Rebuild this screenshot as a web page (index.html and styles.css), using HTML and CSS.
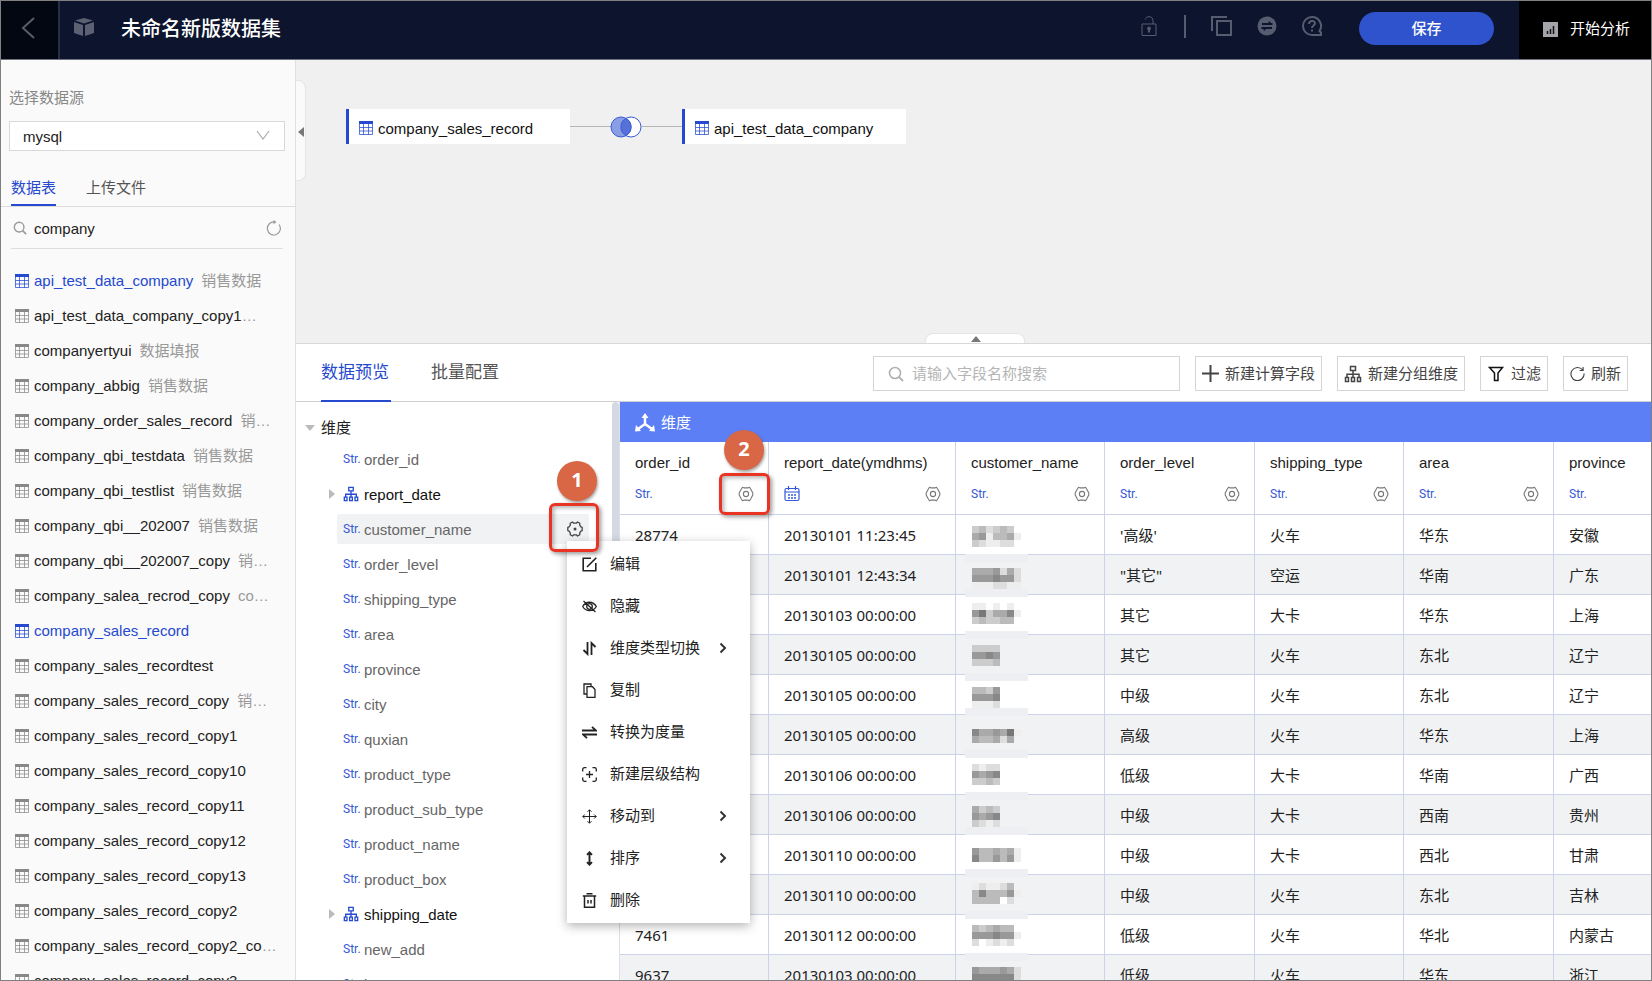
FILE: index.html
```html
<!DOCTYPE html>
<html lang="zh-CN">
<head>
    <meta charset="UTF-8">
    <meta name="viewport" content="width=device-width, initial-scale=1.0">
    <title>未命名新版数据集</title>
    <link rel="stylesheet" href="styles.css">
</head>
<body>
    <svg class="sprite" aria-hidden="true">
        <symbol id="i-table" viewBox="0 0 14 14">
            <path d="M0 0h14v3H0z" fill="currentColor"/>
            <path d="M.5 3v10.500h13V3M.5 6.500h13M.5 10h13M4.500 3v10.500M9.500 3v10.500" fill="none" stroke="currentColor" opacity=".75"/>
        </symbol>
        <symbol id="i-search" viewBox="0 0 16 16">
            <circle cx="7" cy="7" r="5.500" fill="none" stroke="currentColor" stroke-width="1.600"/>
            <path d="M11 11l4 4" stroke="currentColor" stroke-width="1.800"/>
        </symbol>
        <symbol id="i-refresh" viewBox="0 0 16 16">
            <path d="M13.500 4.200A7 7 0 1 0 15 8M14 1v3.800h-3.800" fill="none" stroke="currentColor" stroke-width="1.200"/>
        </symbol>
        <symbol id="i-reload" viewBox="0 0 16 16">
            <path d="M8.500 2A6.500 6.500 0 1 0 13 4.500" fill="none" stroke="currentColor" stroke-width="1.200"/>
            <path d="M7.500 0l3 2-3 2.200z" fill="currentColor"/>
        </symbol>
        <symbol id="i-tree" viewBox="0 0 18 18">
            <path d="M6.500 1.500h5v4h-5zM1.500 12.500h3v4h-3zM7.500 12.500h3v4h-3zM13.500 12.500h3v4h-3zM9 5.500v7M3 12.500V9.300h12v3.200" fill="none" stroke="currentColor" stroke-width="1.500"/>
        </symbol>
        <symbol id="i-hex" viewBox="0 0 16 16">
            <path d="M4.500 1.200L6.200 1.900h3.600l1.700-.7 1.300 2L14.800 7v2l-2 3.800-1.300 2-1.700-.7H6.200l-1.700.7-1.300-2L1.200 9V7l2-3.800z" fill="none" stroke="currentColor" stroke-width="1.100" stroke-linejoin="round"/>
            <circle cx="8" cy="8" r="2.600" fill="none" stroke="currentColor" stroke-width="1.100"/>
        </symbol>
        <symbol id="i-gear" viewBox="0 0 16 16">
            <path d="M5.500 1l1.200 1.200h2.600L10.500 1l2.300 1.300-.1 1.900 1.200 1.600 1.300.6v3.200l-1.300.6-1.200 1.600.1 1.900-2.300 1.300-1.200-1.200H6.700L5.500 15l-2.300-1.300.1-1.900-1.200-1.600L.8 9.600V6.400l1.300-.6 1.200-1.600-.1-1.900z" fill="none" stroke="currentColor" stroke-width="1.300" stroke-linejoin="round"/>
            <circle cx="8" cy="8" r="1.500" fill="currentColor"/>
        </symbol>
        <symbol id="i-calendar" viewBox="0 0 16 16">
            <rect x="1" y="2.500" width="14" height="12" rx="1.500" fill="none" stroke="currentColor" stroke-width="1.200"/>
            <path d="M1 6h14M4.500 0v4M11.500 0v4" stroke="currentColor" stroke-width="1.200"/>
            <path d="M4 9h8M4 12h8" stroke="currentColor" stroke-width="1.500" stroke-dasharray="2 1"/>
        </symbol>
        <symbol id="i-chevron" viewBox="0 0 8 12">
            <path d="M1.500 1.500L6 6l-4.500 4.500" fill="none" stroke="currentColor" stroke-width="2"/>
        </symbol>
    </svg>

    <div class="app">
        <header class="header">
            <button class="back" aria-label="返回">
                <svg width="14" height="22" viewBox="0 0 14 22"><path d="M13 1L2 11l11 10" fill="none" stroke="currentColor" stroke-width="2"/></svg>
            </button>
            <svg class="cube" width="20" height="18" viewBox="0 0 20 18" fill="currentColor"><path d="M10 0l9 2.600-9 2.900-9-2.900zM0 4l9 3v11l-9-3zM20 4l-9 3v11l9-3z"/></svg>
            <h1 class="title">未命名新版数据集</h1>
            <div class="header-tools">
                <button class="tool" aria-label="锁定">
                    <svg width="20" height="20" viewBox="0 0 20 20" fill="none" stroke="currentColor"><path d="M3 8h14v11.500H3zM6 3.500C7 1.500 8 .7 10 .7c2.500 0 4 1.500 4 4V8"/><circle cx="10" cy="12.500" r="1.500" fill="currentColor"/><path d="M10 13v3.500" stroke-width="2"/></svg>
                </button>
                <span class="tool-divider"></span>
                <button class="tool" aria-label="复制">
                    <svg width="21" height="20" viewBox="0 0 21 20" fill="none" stroke="currentColor" stroke-width="2"><path d="M1 15V1h15M6 5h14v14H6z"/></svg>
                </button>
                <button class="tool" aria-label="切换">
                    <svg width="20" height="20" viewBox="0 0 20 20"><circle cx="10" cy="10" r="9.500" fill="currentColor"/><path d="M5 8h10.500M12.500 5.500V8M15 12H4.500M7.500 12v2.500" fill="none" stroke="#0c142e" stroke-width="1.800"/></svg>
                </button>
                <button class="tool tool-help" aria-label="帮助">
                    <svg width="20" height="20" viewBox="0 0 20 20" fill="none" stroke="currentColor" stroke-width="2"><path d="M10 1a9 9 0 1 0 0 18h9v-2.500l-1.500-1.500A9 9 0 0 0 10 1zM7 8c0-4 6-4 6-.7C13 9.500 10 9.500 10 12M10 13.500v2"/></svg>
                </button>
                <button class="save">保存</button>
            </div>
            <button class="analyze">
                <svg width="15" height="15" viewBox="0 0 15 15"><path d="M0 0h15v15H0z" fill="#a3a5ab"/><path d="M4.500 12V9M7.500 12V7M10.500 12V4" stroke="#111" stroke-width="1.500"/></svg>
                开始分析
            </button>
        </header>

        <div class="body">
            <aside class="sidebar">
                <label class="source-label" for="source">选择数据源</label>
                <div class="source">
                    <select id="source"><option>mysql</option></select>
                    <svg width="14" height="10" viewBox="0 0 14 10"><path d="M1 1l6 8 6-8" fill="none" stroke="currentColor" stroke-width="1.200"/></svg>
                </div>
                <nav class="side-tabs">
                    <button class="side-tab active">数据表</button>
                    <button class="side-tab">上传文件</button>
                </nav>
                <div class="side-search">
                    <svg width="14" height="14"><use href="#i-search"/></svg>
                    <input type="text" value="company" aria-label="搜索数据表">
                    <button aria-label="刷新"><svg width="16" height="16"><use href="#i-reload"/></svg></button>
                </div>
                <ul class="tables">
                    <li class="used"><svg><use href="#i-table"/></svg><p><span>api_test_data_company</span>销售数据</p></li>
                    <li><svg><use href="#i-table"/></svg><p><span>api_test_data_company_copy1</span>销售数据</p></li>
                    <li><svg><use href="#i-table"/></svg><p><span>companyertyui</span>数据填报</p></li>
                    <li><svg><use href="#i-table"/></svg><p><span>company_abbig</span>销售数据</p></li>
                    <li><svg><use href="#i-table"/></svg><p><span>company_order_sales_record</span>销售数据</p></li>
                    <li><svg><use href="#i-table"/></svg><p><span>company_qbi_testdata</span>销售数据</p></li>
                    <li><svg><use href="#i-table"/></svg><p><span>company_qbi_testlist</span>销售数据</p></li>
                    <li><svg><use href="#i-table"/></svg><p><span>company_qbi__202007</span>销售数据</p></li>
                    <li><svg><use href="#i-table"/></svg><p><span>company_qbi__202007_copy</span>销售数据</p></li>
                    <li><svg><use href="#i-table"/></svg><p><span>company_salea_recrod_copy</span>company</p></li>
                    <li class="used"><svg><use href="#i-table"/></svg><p><span>company_sales_record</span></p></li>
                    <li><svg><use href="#i-table"/></svg><p><span>company_sales_recordtest</span></p></li>
                    <li><svg><use href="#i-table"/></svg><p><span>company_sales_record_copy</span>销售数据</p></li>
                    <li><svg><use href="#i-table"/></svg><p><span>company_sales_record_copy1</span></p></li>
                    <li><svg><use href="#i-table"/></svg><p><span>company_sales_record_copy10</span></p></li>
                    <li><svg><use href="#i-table"/></svg><p><span>company_sales_record_copy11</span></p></li>
                    <li><svg><use href="#i-table"/></svg><p><span>company_sales_record_copy12</span></p></li>
                    <li><svg><use href="#i-table"/></svg><p><span>company_sales_record_copy13</span></p></li>
                    <li><svg><use href="#i-table"/></svg><p><span>company_sales_record_copy2</span></p></li>
                    <li><svg><use href="#i-table"/></svg><p><span>company_sales_record_copy2_copy</span></p></li>
                    <li><svg><use href="#i-table"/></svg><p><span>company_sales_record_copy3</span></p></li>
                </ul>
            </aside>

            <main class="main">
                <section class="canvas">
                    <div class="join">
                        <div class="node"><svg><use href="#i-table"/></svg>company_sales_record</div>
                        <span class="link"></span>
                        <svg class="venn" width="32" height="22" viewBox="0 0 32 22" stroke="#3a5bd6">
                            <circle cx="21" cy="11" r="10" fill="#fff"/>
                            <circle cx="11" cy="11" r="10" fill="#8a9fe3"/>
                            <path d="M16 2.300a10 10 0 0 1 0 17.400a10 10 0 0 1 0-17.400z" fill="#5672d8"/>
                        </svg>
                        <span class="link"></span>
                        <div class="node"><svg><use href="#i-table"/></svg>api_test_data_company</div>
                    </div>
                    <button class="fold-left" aria-label="收起侧栏"></button>
                    <button class="fold-up" aria-label="展开预览"></button>
                </section>

                <section class="preview">
                    <div class="bar">
                        <button class="tab active">数据预览</button>
                        <button class="tab">批量配置</button>
                        <div class="bar-tools">
                            <div class="field-search">
                                <svg width="16" height="16"><use href="#i-search"/></svg>
                                <input type="text" placeholder="请输入字段名称搜索" aria-label="请输入字段名称搜索">
                            </div>
                            <button class="btn"><svg width="17" height="17" viewBox="0 0 17 17"><path d="M8.500 0v17M0 8.500h17" stroke="currentColor" stroke-width="2"/></svg>新建计算字段</button>
                            <button class="btn"><svg width="18" height="18"><use href="#i-tree"/></svg>新建分组维度</button>
                            <button class="btn"><svg width="18" height="18" viewBox="0 0 18 18"><path d="M2.500 2.500h13L11 8v7.500H7.500V8z" fill="none" stroke="#111" stroke-width="1.500"/></svg>过滤</button>
                            <button class="btn"><svg width="15" height="15"><use href="#i-refresh"/></svg>刷新</button>
                        </div>
                    </div>

                    <div class="content">
                        <div class="tree">
                            <h2 class="tree-head"><i class="caret-down"></i>维度</h2>
                            <ul>
                                <li><div class="field"><b>Str.</b>order_id</div></li>
                                <li class="group"><div class="field"><svg width="16" height="16"><use href="#i-tree"/></svg>report_date</div></li>
                                <li class="current"><div class="field"><b>Str.</b>customer_name<button class="gear" aria-label="字段设置"><svg width="16" height="16"><use href="#i-gear"/></svg></button></div></li>
                                <li><div class="field"><b>Str.</b>order_level</div></li>
                                <li><div class="field"><b>Str.</b>shipping_type</div></li>
                                <li><div class="field"><b>Str.</b>area</div></li>
                                <li><div class="field"><b>Str.</b>province</div></li>
                                <li><div class="field"><b>Str.</b>city</div></li>
                                <li><div class="field"><b>Str.</b>quxian</div></li>
                                <li><div class="field"><b>Str.</b>product_type</div></li>
                                <li><div class="field"><b>Str.</b>product_sub_type</div></li>
                                <li><div class="field"><b>Str.</b>product_name</div></li>
                                <li><div class="field"><b>Str.</b>product_box</div></li>
                                <li class="group"><div class="field"><svg width="16" height="16"><use href="#i-tree"/></svg>shipping_date</div></li>
                                <li><div class="field"><b>Str.</b>new_add</div></li>
                                <li><div class="field"><b>Str.</b>is_new</div></li>
                            </ul>
                        </div>
                        <div class="scroll"><span></span></div>

                        <div class="grid">
                            <div class="grid-band">
                                <svg width="20" height="20" viewBox="0 0 20 20"><path d="M10 3v9M10 11l-7 5M10 11l7 5" stroke="#fff" stroke-width="2.500"/><path d="M10 0l3.500 5h-7zM0 18.500l1-6.500 5 6zM20 18.500l-1-6.500-5 6z" fill="#fff"/></svg>
                                维度
                            </div>
                            <table>
                                <colgroup>
                                    <col class="c149"><col class="c187"><col class="c149"><col class="c150"><col class="c149"><col class="c150"><col>
                                </colgroup>
                                <thead>
                                    <tr>
                                        <th>order_id<div><b>Str.</b><button class="gear" aria-label="设置"><svg width="16" height="16"><use href="#i-hex"/></svg></button></div></th>
                                        <th>report_date(ymdhms)<div><svg class="date" width="16" height="16"><use href="#i-calendar"/></svg><button class="gear" aria-label="设置"><svg width="16" height="16"><use href="#i-hex"/></svg></button></div></th>
                                        <th>customer_name<div><b>Str.</b><button class="gear" aria-label="设置"><svg width="16" height="16"><use href="#i-hex"/></svg></button></div></th>
                                        <th>order_level<div><b>Str.</b><button class="gear" aria-label="设置"><svg width="16" height="16"><use href="#i-hex"/></svg></button></div></th>
                                        <th>shipping_type<div><b>Str.</b><button class="gear" aria-label="设置"><svg width="16" height="16"><use href="#i-hex"/></svg></button></div></th>
                                        <th>area<div><b>Str.</b><button class="gear" aria-label="设置"><svg width="16" height="16"><use href="#i-hex"/></svg></button></div></th>
                                        <th>province<div><b>Str.</b></div></th>
                                    </tr>
                                </thead>
                                <tbody>
                                    <tr><td>28774</td><td>20130101 11:23:45</td><td></td><td>'高级'</td><td>火车</td><td>华东</td><td>安徽</td></tr>
                                    <tr><td></td><td>20130101 12:43:34</td><td></td><td>"其它"</td><td>空运</td><td>华南</td><td>广东</td></tr>
                                    <tr><td></td><td>20130103 00:00:00</td><td></td><td>其它</td><td>大卡</td><td>华东</td><td>上海</td></tr>
                                    <tr><td></td><td>20130105 00:00:00</td><td></td><td>其它</td><td>火车</td><td>东北</td><td>辽宁</td></tr>
                                    <tr><td></td><td>20130105 00:00:00</td><td></td><td>中级</td><td>火车</td><td>东北</td><td>辽宁</td></tr>
                                    <tr><td></td><td>20130105 00:00:00</td><td></td><td>高级</td><td>火车</td><td>华东</td><td>上海</td></tr>
                                    <tr><td></td><td>20130106 00:00:00</td><td></td><td>低级</td><td>大卡</td><td>华南</td><td>广西</td></tr>
                                    <tr><td></td><td>20130106 00:00:00</td><td></td><td>中级</td><td>大卡</td><td>西南</td><td>贵州</td></tr>
                                    <tr><td></td><td>20130110 00:00:00</td><td></td><td>中级</td><td>大卡</td><td>西北</td><td>甘肃</td></tr>
                                    <tr><td></td><td>20130110 00:00:00</td><td></td><td>中级</td><td>火车</td><td>东北</td><td>吉林</td></tr>
                                    <tr><td>7461</td><td>20130112 00:00:00</td><td></td><td>低级</td><td>火车</td><td>华北</td><td>内蒙古</td></tr>
                                    <tr><td>9637</td><td>20130103 00:00:00</td><td></td><td>低级</td><td>火车</td><td>华东</td><td>浙江</td></tr>
                                </tbody>
                            </table>
                            <svg class="mask" id="mask" width="63" height="455"></svg>
                        </div>
                    </div>
                </section>

                <div class="menu" role="menu">
                    <button role="menuitem"><svg viewBox="0 0 15 15"><path d="M9 1.200H1.200v12.600h12.600V6M5 10l9.300-9.300" stroke-width="1.600"/></svg>编辑</button>
                    <button role="menuitem"><svg viewBox="0 0 15 15"><path d="M.7 7.500C4 1.800 11 1.800 14.300 7.500 11 13 4 13 .7 7.500zM1.500 2l12 11" stroke-width="1.300"/><circle cx="7.500" cy="7.500" r="2.800" stroke-width="1.300"/></svg>隐藏</button>
                    <button role="menuitem"><svg viewBox="0 0 15 15"><path d="M5.500 1v12L1.500 9M9.500 14V2l4 4" stroke-width="1.800"/></svg>维度类型切换<svg class="more"><use href="#i-chevron"/></svg></button>
                    <button role="menuitem"><svg viewBox="0 0 15 15"><path d="M5 3.700h5.500L13 6.500v7.800H5zM4.500 11H2V1h7v2.500" stroke-width="1.300"/></svg>复制</button>
                    <button role="menuitem"><svg viewBox="0 0 15 15"><path d="M0 5.500h14L10 1.800M15 9.500H1l4 3.700" stroke-width="1.800"/></svg>转换为度量</button>
                    <button role="menuitem"><svg viewBox="0 0 15 15"><path d="M4.500.7H2.500Q.7.700.7 2.500V4.500M10.500.7h2q1.800 0 1.800 1.800v2M.7 10.500v2q0 1.800 1.800 1.800h2M14.300 10.500v2q0 1.800-1.800 1.800h-2M7.500 4v7M4 7.500h7" stroke-width="1.300"/></svg>新建层级结构</button>
                    <button role="menuitem"><svg viewBox="0 0 15 15"><path d="M7.500.8v13.400M.8 7.500h13.400M5.500 2.800l2-2 2 2M5.500 12.200l2 2 2-2M2.800 5.500l-2 2 2 2M12.200 5.500l2 2-2 2"/></svg>移动到<svg class="more"><use href="#i-chevron"/></svg></button>
                    <button role="menuitem"><svg viewBox="0 0 15 15"><path d="M7.500 1v13M5 3.800l2.500-2.500L10 3.800M5 11.200l2.500 2.500 2.500-2.500" stroke-width="1.900"/></svg>排序<svg class="more"><use href="#i-chevron"/></svg></button>
                    <button role="menuitem"><svg viewBox="0 0 15 15"><path d="M.8 3h13.400M4.500.8h6M2.500 3v11.200h10V3M6 7v3.500M9 7v3.500" stroke-width="1.500"/></svg>删除</button>
                </div>

                <div class="step step-1">1</div>
                <div class="frame frame-1"></div>
                <div class="step step-2">2</div>
                <div class="frame frame-2"></div>
            </main>
        </div>
    </div>
    <script src="script.js"></script>
</body>
</html>
```
FILE: styles.css
```css
* { box-sizing: border-box; }
body {
    margin: 0;
    font-family: "Liberation Sans", "Noto Sans CJK SC", sans-serif;
    font-size: 15px;
    line-height: 20px;
    color: #222;
}
button, input, select {
    font: inherit;
    color: inherit;
    margin: 0;
    padding: 0;
    border: 0;
    background: none;
    outline: none;
}
ul, p, h1, h2 { margin: 0; padding: 0; list-style: none; font-weight: normal; }
svg { display: block; flex: none; }
.sprite { position: absolute; width: 0; height: 0; }

.app {
    display: flex;
    flex-direction: column;
    height: 100vh;
    border: 1px solid #808080;
    overflow: hidden;
}

/* header */
.header {
    display: flex;
    align-items: stretch;
    flex: none;
    height: 59px;
    background: #0c142e;
    border-bottom: 1px solid #6f7280;
    color: #fff;
}
.back {
    display: flex;
    align-items: center;
    width: 59px;
    padding: 0 0 4px 20px;
    background: #030712;
    border-right: 2px solid #282e43;
    color: #5a5d68;
}
.cube { align-self: center; margin: 0 27px 6px 14px; color: #5b6072; }
.title { font-size: 20px; line-height: 56px; font-weight: 500; }
.header-tools {
    display: flex;
    align-items: center;
    gap: 25px;
    margin-left: auto;
    padding: 0 25px 3px 0;
}
.tool { color: #575d70; margin-bottom: 5px; }
.tool-divider { width: 2px; height: 23px; background: #575d70; margin-bottom: 4px; }
.tool-help { margin-right: 12px; }
.save {
    width: 135px;
    height: 33px;
    border-radius: 17px;
    background: #2f53cd;
    font-weight: 500;
}
.analyze {
    display: flex;
    align-items: center;
    justify-content: center;
    gap: 12px;
    width: 132px;
    padding: 0 0 2px 3px;
    background: #000;
}

.body { display: flex; flex: 1; min-height: 0; }

/* sidebar */
.sidebar {
    flex: none;
    display: flex;
    flex-direction: column;
    width: 295px;
    background: #fafafa;
    border-right: 1px solid #e0e0e0;
    overflow: hidden;
}
.source-label { margin: 28px 8px 13px; color: #888; }
.source { position: relative; margin: 0 10px 0 8px; }
.source select {
    display: block;
    width: 100%;
    height: 30px;
    padding: 1px 13px 0;
    border: 1px solid #d9d9d9;
    background: #fff;
    appearance: none;
}
.source svg { position: absolute; right: 15px; top: 9px; color: #aaa; pointer-events: none; }
.side-tabs {
    display: flex;
    gap: 30px;
    margin-top: 16px;
    padding-left: 10px;
    border-bottom: 1px solid #ddd;
}
.side-tab { height: 39px; padding-top: 4px; border-bottom: 2px solid transparent; color: #555; }
.side-tab.active { color: #2549cf; border-color: #2549cf; }
.side-search {
    display: flex;
    align-items: center;
    flex: none;
    gap: 7px;
    height: 42px;
    margin: 0 12px 14px 10px;
    padding: 0 1px 0 2px;
    border-bottom: 1px solid #ddd;
    color: #999;
}
.side-search input { flex: 1; min-width: 0; color: #222; padding-top: 2px; }
.tables { flex: 1; min-height: 0; overflow: hidden; }
.tables li {
    display: flex;
    align-items: center;
    gap: 5px;
    height: 35px;
    padding: 0 17px 0 14px;
    color: #888;
}
.tables svg, .node svg { width: 14px; height: 14px; }
.tables p {
    flex: 1;
    padding-top: 1px;
    overflow: hidden;
    white-space: nowrap;
    text-overflow: ellipsis;
    color: #999;
}
.tables span { color: #222; margin-right: 8px; }
.tables .used svg, .tables .used span { color: #2549cf; }

/* join canvas */
.main { position: relative; display: flex; flex-direction: column; flex: 1; min-width: 0; }
.canvas {
    position: relative;
    flex: none;
    height: 284px;
    padding: 49px 50px;
    background: #f0f0f0;
    border-bottom: 1px solid #d8d8d8;
}
.join { display: flex; align-items: center; }
.node {
    display: flex;
    align-items: center;
    gap: 5px;
    width: 224px;
    height: 35px;
    padding: 4px 0 0 10px;
    border-left: 3px solid #2549cf;
    background: #fff;
    color: #111;
}
.node svg { color: #2549cf; margin-bottom: 2px; }
.link { width: 41px; height: 1px; background: #b5b5b5; }
.venn { margin: 0 -1px; }
.fold-left {
    position: absolute;
    left: 0;
    top: 20px;
    width: 10px;
    height: 101px;
    border: 1px solid #e4e4e4;
    border-left: 0;
    border-radius: 0 8px 8px 0;
    background: #fafafa;
}
.fold-left::after {
    content: "";
    position: absolute;
    left: 2px;
    top: 46px;
    border: 5px solid transparent;
    border-left: 0;
    border-right: 6px solid #777;
}
.fold-up {
    position: absolute;
    left: 629px;
    bottom: 0;
    width: 100px;
    height: 10px;
    border: 1px solid #e4e4e4;
    border-bottom: 0;
    border-radius: 8px 8px 0 0;
    background: #fff;
}
.fold-up::after {
    content: "";
    position: absolute;
    left: 45px;
    top: 2px;
    border: 5px solid transparent;
    border-top: 0;
    border-bottom: 6px solid #777;
}

/* preview */
.preview { display: flex; flex-direction: column; flex: 1; min-height: 0; background: #fff; }
.bar {
    display: flex;
    flex: none;
    gap: 40px;
    height: 58px;
    padding: 0 23px 0 25px;
    border-bottom: 1px solid #d0d0d0;
}
.tab {
    height: 58px;
    padding: 1px 2px 0 0;
    border-bottom: 2px solid transparent;
    font-size: 17px;
    color: #555;
}
.tab.active { color: #2549cf; border-color: #2549cf; }
.bar-tools { display: flex; align-items: center; gap: 15px; margin-left: auto; padding-top: 2px; }
.field-search {
    display: flex;
    align-items: center;
    gap: 8px;
    width: 307px;
    height: 35px;
    padding-left: 14px;
    border: 1px solid #d5d5d5;
    color: #b0b0b0;
}
.field-search input { flex: 1; min-width: 0; color: #222; }
.field-search input::placeholder { color: #b5b5b5; }
.btn {
    display: flex;
    align-items: center;
    gap: 6px;
    height: 35px;
    padding: 0 6px;
    border: 1px solid #d5d5d5;
    color: #444;
}
.content { display: flex; flex: 1; min-height: 0; overflow: hidden; }

/* field tree */
.tree { flex: none; width: 316px; padding-top: 10px; }
.tree-head {
    display: flex;
    align-items: center;
    gap: 6px;
    height: 32px;
    padding-left: 9px;
    font-size: 15px;
}
.caret-down { border: 5px solid transparent; border-bottom: 0; border-top: 6px solid #bbb; }
.tree li {
    display: flex;
    align-items: center;
    height: 30px;
    margin-bottom: 5px;
    padding: 0 23px 0 41px;
    color: #666;
}
.tree .group { color: #111; padding-left: 33px; }
.group::before {
    content: "";
    margin-right: 2px;
    border: 5px solid transparent;
    border-right: 0;
    border-left: 6px solid #bbb;
}
.field {
    display: flex;
    align-items: center;
    flex: 1;
    height: 30px;
    padding: 2px 6px 0 6px;
    border-radius: 2px;
}
.current .field { background: #f1f2f4; }
.field b { width: 21px; padding-bottom: 2px; }
.field > svg { margin: 0 5px 2px 0; color: #2549cf; }
b {
    font-family: Roboto, sans-serif;
    font-size: 12px;
    font-weight: normal;
    color: #3457d5;
}
.gear { margin-left: auto; color: #777; }
.field .gear { color: #444; margin-bottom: 2px; }
.scroll { flex: none; width: 7px; }
.scroll span { display: block; height: 200px; border-radius: 4px; background: #d5d9e3; }

/* data grid */
.grid { position: relative; flex: 1; min-width: 0; border-left: 1px solid #dcdfe8; overflow: hidden; }
.grid-band {
    display: flex;
    align-items: center;
    gap: 6px;
    height: 40px;
    padding: 1px 0 0 15px;
    background: #5c7ff5;
    color: #fff;
}
table { width: 100%; border-collapse: separate; border-spacing: 0; table-layout: fixed; }
.c149 { width: 149px; }
.c150 { width: 150px; }
.c187 { width: 187px; }
th, td {
    padding: 0 14px 0 15px;
    border-right: 1px solid #ccd3e6;
    border-bottom: 1px solid #ccd3e6;
    text-align: left;
    white-space: nowrap;
}
th:last-child, td:last-child { border-right: 0; }
th { height: 73px; font-weight: normal; }
th div { display: flex; align-items: center; height: 20px; margin-top: 11px; }
.date { color: #3457d5; }
td { height: 40px; font-family: "Noto Sans", "Noto Sans CJK SC", sans-serif; }
tbody tr:nth-child(even) { background: #f1f2f4; }
.mask { position: absolute; left: 345px; top: 124px; }

/* context menu */
.menu {
    position: absolute;
    left: 271px;
    top: 481px;
    width: 183px;
    padding: 2px 0;
    background: #fff;
    box-shadow: 0 3px 10px rgba(0, 0, 0, 0.3);
}
.menu button {
    display: flex;
    align-items: center;
    gap: 13px;
    width: 100%;
    height: 42px;
    padding: 0 23px 0 15px;
}
.menu svg { width: 15px; height: 15px; fill: none; stroke: #222; }
.menu .more { width: 8px; height: 12px; margin-left: auto; color: #333; stroke: none; }

/* step marks */
.step {
    position: absolute;
    width: 40px;
    height: 40px;
    border-radius: 50%;
    background: #d96645;
    box-shadow: 1px 2px 3px rgba(0, 0, 0, 0.35);
    color: #fff;
    font: bold 20px/38px "Noto Sans", sans-serif;
    text-align: center;
}
.frame {
    position: absolute;
    border: 3px solid #e93323;
    border-radius: 6px;
    box-shadow: 2px 2px 4px rgba(0, 0, 0, 0.4), inset 2px 2px 4px rgba(0, 0, 0, 0.3);
    pointer-events: none;
}
.step-1 { left: 261px; top: 401px; }
.frame-1 { left: 253px; top: 443px; width: 50px; height: 49px; }
.step-2 { left: 428px; top: 370px; }
.frame-2 { left: 423px; top: 413px; width: 51px; height: 42px; }
```
FILE: script.js
```js
// customer_name is masked: 7px tiles, one hex digit per grey level
const tiles = [
    [0, 'cbdcbc.'], [7, 'a9ebbae'], [14, 'cdeeddf'],
    [42, 'aaa9dad'], [49, '999899d'], [56, 'eeeddee'],
    [77, 'eefefe.'], [84, '97caa8e'], [91, 'cbccbb.'],
    [119, 'cccc'], [126, '9989'], [133, 'cccb'],
    [161, 'bbc9'], [168, '9998'], [175, 'eeed'],
    [203, '8aa9a7e'], [210, 'abbada.'],
    [238, 'dedd'], [245, '9a98'], [252, 'ccbc'],
    [280, 'acbc'], [287, '9a98'], [294, 'cded'],
    [322, '9bbabae'], [329, '8bb9b9e'],
    [357, 'edeedb.'], [364, 'b8bbb9e'], [371, 'bbbbfd.'],
    [399, 'bcbabbf'], [406, '999899e'], [413, 'dfeded.'],
    [441, '9aaa9ad'], [448, '888888d']
];
const bands = [28, 63, 105, 147, 182, 224, 266, 301, 343, 385, 427];

let html = '';
bands.forEach(y => {
    html += `<rect x="0" y="${y}" width="63" height="8" fill="#eeeff3"/>`;
});
tiles.forEach(([y, row]) => {
    [...row].forEach((c, i) => {
        if (c !== '.') {
            html += `<rect x="${7 + i * 7}" y="${y}" width="7" height="7" fill="#${c.repeat(3)}"/>`;
        }
    });
});
document.getElementById('mask').innerHTML = html;
```
